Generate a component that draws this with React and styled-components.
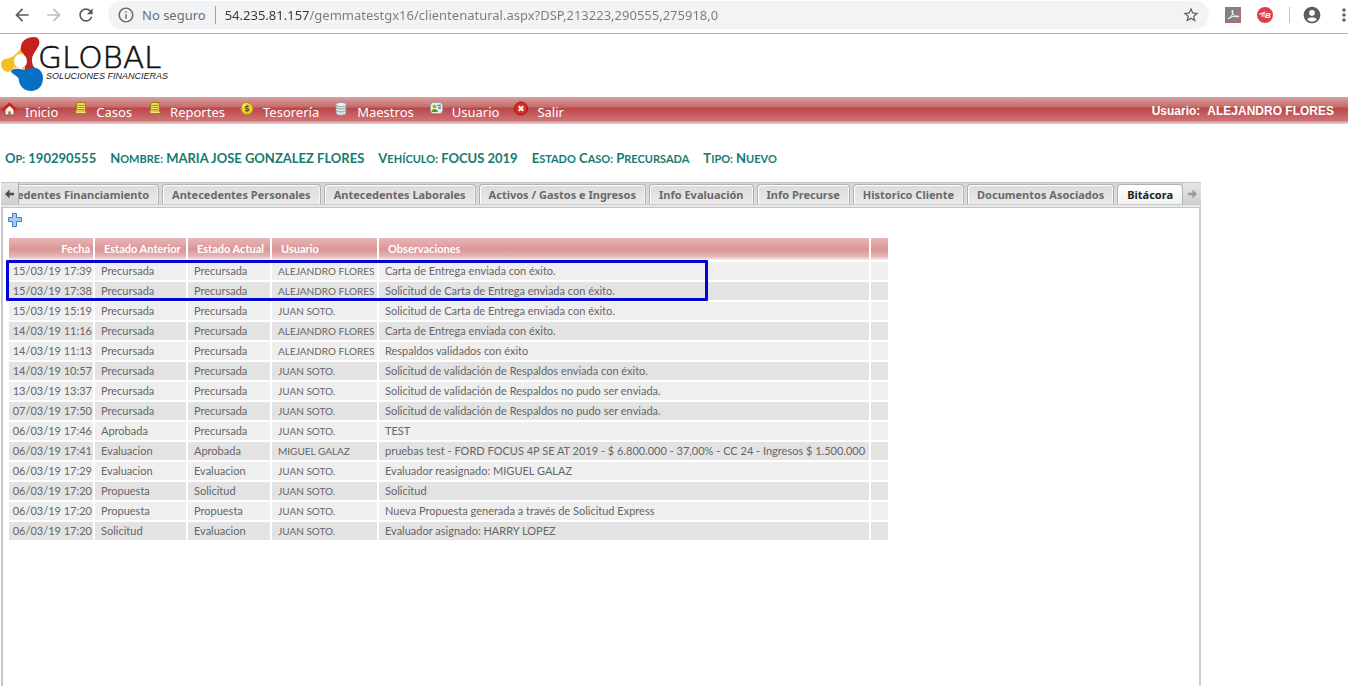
import React from "react";
import styled, { createGlobalStyle, css } from "styled-components";
import {
  MdArrowBack,
  MdArrowForward,
  MdRefresh,
  MdInfoOutline,
  MdStarBorder,
  MdAccountCircle,
  MdMoreVert,
} from "react-icons/md";

const ui = `"Noto Sans", sans-serif`;
const narrow = `Lato, sans-serif`;

const GlobalStyle = createGlobalStyle`
  *, *::before, *::after { box-sizing: border-box; }
  body { margin: 0; background: #fff; overflow: hidden; }
  button { border: 0; padding: 0; background: none; font: inherit; color: inherit; cursor: pointer; }
`;

const Page = styled.div`
  display: flex;
  flex-direction: column;
  height: 100vh;
  overflow: hidden;
`;

/* Browser toolbar */
const Toolbar = styled.header`
  display: flex;
  align-items: center;
  flex: none;
  height: 34px;
  padding: 0 0 4px 12px;
  border-bottom: 1px solid #b4b4b4;
  overflow: hidden;
`;
const NavButtons = styled.nav`
  display: flex;
  gap: 12px;
  margin-right: 12px;
`;
const IconButton = styled.button`
  display: flex;
  align-items: center;
  justify-content: center;
  flex: none;
  width: 20px;
  height: 20px;
  color: ${(p) => (p.$faded ? "#bbbdc0" : "#5a5d61")};
  svg { flex: none; }
`;
const Omnibox = styled.div`
  display: flex;
  align-items: center;
  flex: 1;
  height: 28px;
  padding: 0 8px 0 9px;
  border-radius: 14px;
  background: #f1f3f4;
  font: 13px/20px ${ui};
`;
const Security = styled.button`
  display: flex;
  align-items: center;
  gap: 7px;
  flex: none;
  padding-right: 9px;
  border-right: 1px solid #9a9da1;
  color: #6b6e72;
  line-height: 16px;
`;
const Address = styled.input`
  flex: 1;
  min-width: 0;
  margin-left: 9px;
  padding: 0;
  border: 0;
  outline: 0;
  font: inherit;
  color: #777a7e;
  background: linear-gradient(90deg, #33363a 85px, #777a7e 85px);
  background-clip: text;
  -webkit-text-fill-color: transparent;
`;
const Extensions = styled.div`
  display: flex;
  align-items: center;
  flex: none;
  margin-left: 16px;
`;
const ExtButton = styled(IconButton)`
  width: 16px;
  margin-right: 16px;
`;
const Separator = styled.span`
  width: 1px;
  height: 16px;
  background: #c4c6c8;
  margin-right: 12px;
`;
const MoreButton = styled(IconButton)`
  width: 8px;
  margin-left: 18px;
`;

/* Site header */
const Brand = styled.div`
  flex: none;
  height: 63px;
  svg { display: block; }
`;
const MenuBar = styled.nav`
  display: flex;
  align-items: flex-start;
  justify-content: space-between;
  flex: none;
  height: 27px;
  padding: 0 14px 0 2px;
  color: #fff;
  background: linear-gradient(#d9a3a3 0, #d18a8a 4px, #c76a6a 10px, #bb4748 11px, #c05052 14px, #cf7375 24px, #e3b4b4 25px, #e9c8c8 27px);
`;
const MenuList = styled.ul`
  display: flex;
  gap: 15px;
  margin: 0;
  padding: 0;
  list-style: none;
`;
const MenuLink = styled.a`
  display: flex;
  gap: 7px;
  padding-top: 4px;
  font: 13px/22px ${ui};
  color: #fff;
  text-decoration: none;
`;
const CurrentUser = styled.div`
  display: flex;
  gap: 7px;
  padding-top: 4px;
  font: bold 12px/20px "Liberation Sans", Arial, sans-serif;
`;

/* Case summary */
const Summary = styled.section`
  display: flex;
  gap: 14px;
  flex: none;
  padding: 24px 5px 14px;
  font: bold 13px/20px ${narrow};
  color: #157a71;
  white-space: nowrap;
`;
const LowCaps = styled.span`
  font-size: 11px;
  line-height: 16px;
  text-transform: uppercase;
`;

/* Tabs */
const Panel = styled.main`
  display: flex;
  flex-direction: column;
  flex: 1;
  width: 100%;
  max-width: 1200px;
  margin-left: 1px;
`;
const TabStrip = styled.div`
  display: flex;
  flex: none;
  height: 26px;
  padding-bottom: 3px;
  border: 1px solid #c4c4c4;
  border-width: 1px 0;
  background: linear-gradient(#d6d6d6 0, #dedede 21px, #cacaca 21px, #cacaca 22px, #e8e8e8 22px);
`;
const Scroll = styled.button`
  display: grid;
  place-items: center;
  flex: none;
  width: 18px;
  color: ${(p) => (p.$faded ? "#9a9a9a" : "#4c4c4c")};
  background: linear-gradient(#e6e6e6, #cfcfcf);
  border-right: ${(p) => (p.$faded ? "0" : "1px solid #aaa")};
`;
const TabList = styled.div`
  display: flex;
  justify-content: flex-end;
  gap: 3px;
  flex: 1;
  min-width: 0;
  overflow: hidden;
`;
const Tab = styled.button`
  flex: none;
  height: 21px;
  margin-top: 1px;
  padding: 0 9px;
  border: 1px solid #b2b2b2;
  border-bottom: 0;
  border-radius: 4px 4px 0 0;
  box-shadow: inset 1px 1px 0 #fff, inset -1px 0 0 #f4f4f4;
  background: linear-gradient(#dcdcdc, #ebebeb);
  font: bold 11px/20px ${ui};
  color: #696969;
  white-space: nowrap;
  ${(p) => p.$active && css`
    background: linear-gradient(#fff, #f0f0f0);
    color: #222;
  `}
`;
const Body = styled.div`
  flex: 1;
  padding: 4px 4px;
  border: 2px solid #ccc;
  border-width: 0 2px;
  border-left-color: #c6c6c6;
`;
const AddButton = styled.button`
  display: block;
  width: 16px;
  height: 16px;
  margin-bottom: 8px;
`;

/* Log table */
const TableWrap = styled.div`
  position: relative;
  width: fit-content;
`;
const Table = styled.table`
  width: 883px;
  border-collapse: separate;
  border-spacing: 2px;
  table-layout: fixed;
  font: 11px/18px ${narrow};
  color: #666;
`;
const Th = styled.th`
  height: 22px;
  padding: 0 3px 0 9px;
  text-align: ${(p) => p.$align || "left"};
  font-weight: bold;
  color: #fff;
  background: linear-gradient(#e6b5b5 0, #e2a6a6 6px, #db9496 11px, #e2a9a9 16px, #e9bcbc 19px, #fbf0f0 22px);
  white-space: nowrap;
`;
const Tr = styled.tr`
  background: #efefef;
  &:nth-child(even) { background: #e3e3e3; }
`;
const Td = styled.td`
  height: 18px;
  padding: 0 0 0 6px;
  text-align: left;
  white-space: nowrap;
`;
const DateTd = styled(Td)`
  padding: 0 1px 0 0;
  text-align: right;
`;
const UserTd = styled(Td)`
  font-size: 10px;
`;
const Highlight = styled.div`
  position: absolute;
  top: 24px;
  left: -1px;
  width: 702px;
  height: 41px;
  border: 3px solid #0404d2;
  border-radius: 1px;
  pointer-events: none;
`;

const Logo = () => (
  <svg width="172" height="60" viewBox="0 0 172 60" role="img" aria-label="Global Soluciones Financieras">
    <path d="M21 14C17 20 12 24 5 25 1 26 0 30 2 34c2 4 7 5 10 2 2-3 4-3 8-2l4 1 3-7-4-12z" fill="#f7bf26" />
    <path d="M21 12C22 6 28 3 34 3c5 0 7 5 4 10-3 5-6 8-6 13 0 4 1 7 4 9l-11 2-1-17c-2-2-4-3-3-8z" fill="#c5211f" />
    <path d="M11 38c0-3 5-4 9-3 6 2 10-2 16-1 4 1 7 5 7 10 0 8-5 13-12 13-6 0-11-4-12-10 0-5-4-5-8-9z" fill="#0870c2" />
    <ellipse cx="20.500" cy="27" rx="6.500" ry="7.200" fill="#fff" />
    <text x="38" y="34" fontFamily="DejaVu Sans" fontWeight="200" fontSize="31" fill="#111" stroke="#111" strokeWidth="0.6">GLOBAL</text>
    <text x="46" y="45" fontFamily="Liberation Sans" fontStyle="italic" fontSize="9" fill="#222">SOLUCIONES FINANCIERAS</text>
  </svg>
);

const MenuIcon = ({ kind }) => (
  <svg width="16" height="16" viewBox="0 0 16 16" aria-hidden="true">
    {kind === "home" && (
      <g>
        <path d="M3 8v6h9V8L7.500 4z" fill="#fff4ee" stroke="#9a4a40" />
        <path d="M6 14v-3q1.500-2 3 0v3z" fill="#8d8d92" />
        <path d="M1.500 8.500L7.500 3l6 5.500" fill="none" stroke="#c5281b" strokeWidth="3" strokeLinejoin="round" strokeLinecap="round" />
      </g>
    )}
    {kind === "book" && (
      <g>
        <path d="M3.500 2.500q0-1 1-1h8q-1 1 0 2v7h1v2h-9.500q-2 0-2-2.500l1.500-.5z" fill="#e2c43a" stroke="#a27e0a" strokeLinejoin="round" />
        <path d="M5.500 4.500h5.500M5.500 6.500h5.500M5.500 8.500h5.500" stroke="#a88a18" />
        <path d="M5 3h6M5 5.500h6M5 7.500h6M4 11.500h8" stroke="#fbf0a0" strokeWidth=".8" />
      </g>
    )}
    {kind === "coin" && (
      <g>
        <circle cx="7" cy="7.500" r="6" fill="#edd22b" stroke="#a88b12" />
        <circle cx="5.500" cy="5" r="3" fill="#fbf3a0" opacity=".6" />
        <path d="M9 5.300H6.500q-1.500 0-1.500 1.100T6.500 7.500h1q1.500 0 1.500 1.100T7.500 9.700H5M7 3.800v7.400" fill="none" stroke="#6d5b0c" strokeWidth="1.200" />
      </g>
    )}
    {kind === "data" && (
      <g fill="#dfe2e4" stroke="#8c9296" strokeWidth=".8">
        <path d="M2 3v9c0 3 10 3 10 0V3z" />
        <path d="M2 9c0 2.500 10 2.500 10 0M2 6c0 2.500 10 2.500 10 0" fill="none" />
        <ellipse cx="7" cy="3.500" rx="5" ry="2" fill="#f4f5f6" />
      </g>
    )}
    {kind === "user" && (
      <g>
        <rect x="1.500" y="1.500" width="12" height="11" rx="3" fill="#eef2f0" stroke="#93a3a0" />
        <circle cx="5.500" cy="5.500" r="2" fill="#d39a3c" />
        <path d="M2.500 11c0-4 6-4 6.500 0z" fill="#3ba22e" />
        <path d="M8.500 4.500h3.500M9 7h3" stroke="#5682a8" strokeWidth="1.300" />
      </g>
    )}
    {kind === "exit" && (
      <g>
        <circle cx="7" cy="7.500" r="6.500" fill="#d92e22" stroke="#961510" />
        <path d="M4.800 5.300l4.400 4.400m0-4.400l-4.400 4.400" stroke="#fff" strokeWidth="2" />
      </g>
    )}
  </svg>
);

const Arrow = ({ flip }) => (
  <svg width="10" height="10" viewBox="0 0 10 10" aria-hidden="true">
    <path d={flip ? "M10 5L5.500 .5V3.700H1v2.600h4.500v3.200z" : "M0 5L4.500 .5V3.700H9v2.600H4.500v3.200z"} fill="currentColor" />
  </svg>
);

/* Lowercase runs are set as capitals one step smaller than the true capitals */
const SmallCaps = ({ text }) => (
  <span>
    {text.split(/([a-zí]+:?)/).map((part, i) => (i % 2 ? <LowCaps key={i}>{part}</LowCaps> : part))}
  </span>
);

const menu = [
  ["Inicio", "home"],
  ["Casos", "book"],
  ["Reportes", "book"],
  ["Tesorería", "coin"],
  ["Maestros", "data"],
  ["Usuario", "user"],
  ["Salir", "exit"],
];

const summary = [
  "Op: 190290555",
  "Nombre: MARIA JOSE GONZALEZ FLORES",
  "Vehículo: FOCUS 2019",
  "Estado Caso: Precursada",
  "Tipo: Nuevo",
];

const tabs = [
  "Antecedentes Financiamiento",
  "Antecedentes Personales",
  "Antecedentes Laborales",
  "Activos / Gastos e Ingresos",
  "Info Evaluación",
  "Info Precurse",
  "Historico Cliente",
  "Documentos Asociados",
  "Bitácora",
];

const rows = [
  ["15/03/19 17:39", "Precursada", "Precursada", "ALEJANDRO FLORES", "Carta de Entrega enviada con éxito."],
  ["15/03/19 17:38", "Precursada", "Precursada", "ALEJANDRO FLORES", "Solicitud de Carta de Entrega enviada con éxito."],
  ["15/03/19 15:19", "Precursada", "Precursada", "JUAN SOTO.", "Solicitud de Carta de Entrega enviada con éxito."],
  ["14/03/19 11:16", "Precursada", "Precursada", "ALEJANDRO FLORES", "Carta de Entrega enviada con éxito."],
  ["14/03/19 11:13", "Precursada", "Precursada", "ALEJANDRO FLORES", "Respaldos validados con éxito"],
  ["14/03/19 10:57", "Precursada", "Precursada", "JUAN SOTO.", "Solicitud de validación de Respaldos enviada con éxito."],
  ["13/03/19 13:37", "Precursada", "Precursada", "JUAN SOTO.", "Solicitud de validación de Respaldos no pudo ser enviada."],
  ["07/03/19 17:50", "Precursada", "Precursada", "JUAN SOTO.", "Solicitud de validación de Respaldos no pudo ser enviada."],
  ["06/03/19 17:46", "Aprobada", "Precursada", "JUAN SOTO.", "TEST"],
  ["06/03/19 17:41", "Evaluacion", "Aprobada", "MIGUEL GALAZ", "pruebas test - FORD FOCUS 4P SE AT 2019 - $ 6.800.000 - 37,00% - CC 24 - Ingresos $ 1.500.000"],
  ["06/03/19 17:29", "Evaluacion", "Evaluacion", "JUAN SOTO.", "Evaluador reasignado: MIGUEL GALAZ"],
  ["06/03/19 17:20", "Propuesta", "Solicitud", "JUAN SOTO.", "Solicitud"],
  ["06/03/19 17:20", "Propuesta", "Propuesta", "JUAN SOTO.", "Nueva Propuesta generada a través de Solicitud Express"],
  ["06/03/19 17:20", "Solicitud", "Evaluacion", "JUAN SOTO.", "Evaluador asignado: HARRY LOPEZ"],
];

export default function App() {
  return (
    <Page>
      <GlobalStyle />
      <Toolbar>
        <NavButtons>
          <IconButton aria-label="Atrás"><MdArrowBack size={20} /></IconButton>
          <IconButton aria-label="Adelante" $faded><MdArrowForward size={20} /></IconButton>
          <IconButton aria-label="Recargar"><MdRefresh size={20} /></IconButton>
        </NavButtons>
        <Omnibox>
          <Security><MdInfoOutline size={18} />No seguro</Security>
          <Address aria-label="Dirección" defaultValue="54.235.81.157/gemmatestgx16/clientenatural.aspx?DSP,213223,290555,275918,0" />
          <IconButton aria-label="Favorito"><MdStarBorder size={18} /></IconButton>
        </Omnibox>
        <Extensions>
          <ExtButton aria-label="PDF">
            <svg width="16" height="16" viewBox="0 0 16 16">
              <rect x=".5" y=".5" width="15" height="15" fill="#858080" stroke="#b56b66" />
              <path d="M3 12c3-1 5-5 5-8 0-1-1-1-1 0 0 3 3 6 6 6 1 0 1-1 0-1-3 0-7 1-9 2-1 1-1 1-1 1z" fill="none" stroke="#fff" />
            </svg>
          </ExtButton>
          <ExtButton aria-label="Extensión B">
            <svg width="16" height="16" viewBox="0 0 16 16">
              <circle cx="8" cy="8" r="8" fill="#dc3f47" />
              <path d="M2 7h6M4 9h4M4 7l4-2" stroke="#fff" strokeWidth="1.200" />
              <text x="8" y="11" fontFamily="Liberation Sans" fontWeight="bold" fontStyle="italic" fontSize="8" fill="#fff">B</text>
            </svg>
          </ExtButton>
          <Separator />
          <IconButton aria-label="Perfil"><MdAccountCircle size={20} /></IconButton>
          <MoreButton aria-label="Menú"><MdMoreVert size={20} /></MoreButton>
        </Extensions>
      </Toolbar>

      <Brand><Logo /></Brand>
      <MenuBar>
        <MenuList>
          {menu.map(([label, kind]) => (
            <li key={label}><MenuLink href="#"><MenuIcon kind={kind} />{label}</MenuLink></li>
          ))}
        </MenuList>
        <CurrentUser><span>Usuario:</span><span>ALEJANDRO FLORES</span></CurrentUser>
      </MenuBar>

      <Summary>{summary.map((s) => <SmallCaps key={s} text={s} />)}</Summary>

      <Panel>
        <TabStrip>
          <Scroll aria-label="Pestañas anteriores"><Arrow /></Scroll>
          <TabList role="tablist">
            {tabs.map((t) => (
              <Tab key={t} role="tab" aria-selected={t === "Bitácora"} $active={t === "Bitácora"}>{t}</Tab>
            ))}
          </TabList>
          <Scroll aria-label="Pestañas siguientes" $faded><Arrow flip /></Scroll>
        </TabStrip>
        <Body>
          <AddButton aria-label="Agregar">
            <svg width="16" height="16" viewBox="0 0 16 16">
              <path d="M5.500 1.500h4v4h5v4h-5v5h-4v-5h-4v-4h4z" fill="#a9cdf2" stroke="#3f7fc4" strokeLinejoin="round" />
            </svg>
          </AddButton>
          <TableWrap>
            <Table>
              <colgroup>
                <col style={{ width: 84 }} /><col style={{ width: 91 }} /><col style={{ width: 82 }} />
                <col style={{ width: 105 }} /><col /><col style={{ width: 17 }} />
              </colgroup>
              <thead>
                <tr>
                  <Th $align="right">Fecha</Th><Th>Estado Anterior</Th><Th>Estado Actual</Th>
                  <Th>Usuario</Th><Th>Observaciones</Th><Th />
                </tr>
              </thead>
              <tbody>
                {rows.map(([date, before, after, user, note], i) => (
                  <Tr key={i}>
                    <DateTd>{date}</DateTd>
                    <Td>{before}</Td>
                    <Td>{after}</Td>
                    <UserTd>{user}</UserTd>
                    <Td>{note}</Td>
                    <Td />
                  </Tr>
                ))}
              </tbody>
            </Table>
            <Highlight />
          </TableWrap>
        </Body>
      </Panel>
    </Page>
  );
}
